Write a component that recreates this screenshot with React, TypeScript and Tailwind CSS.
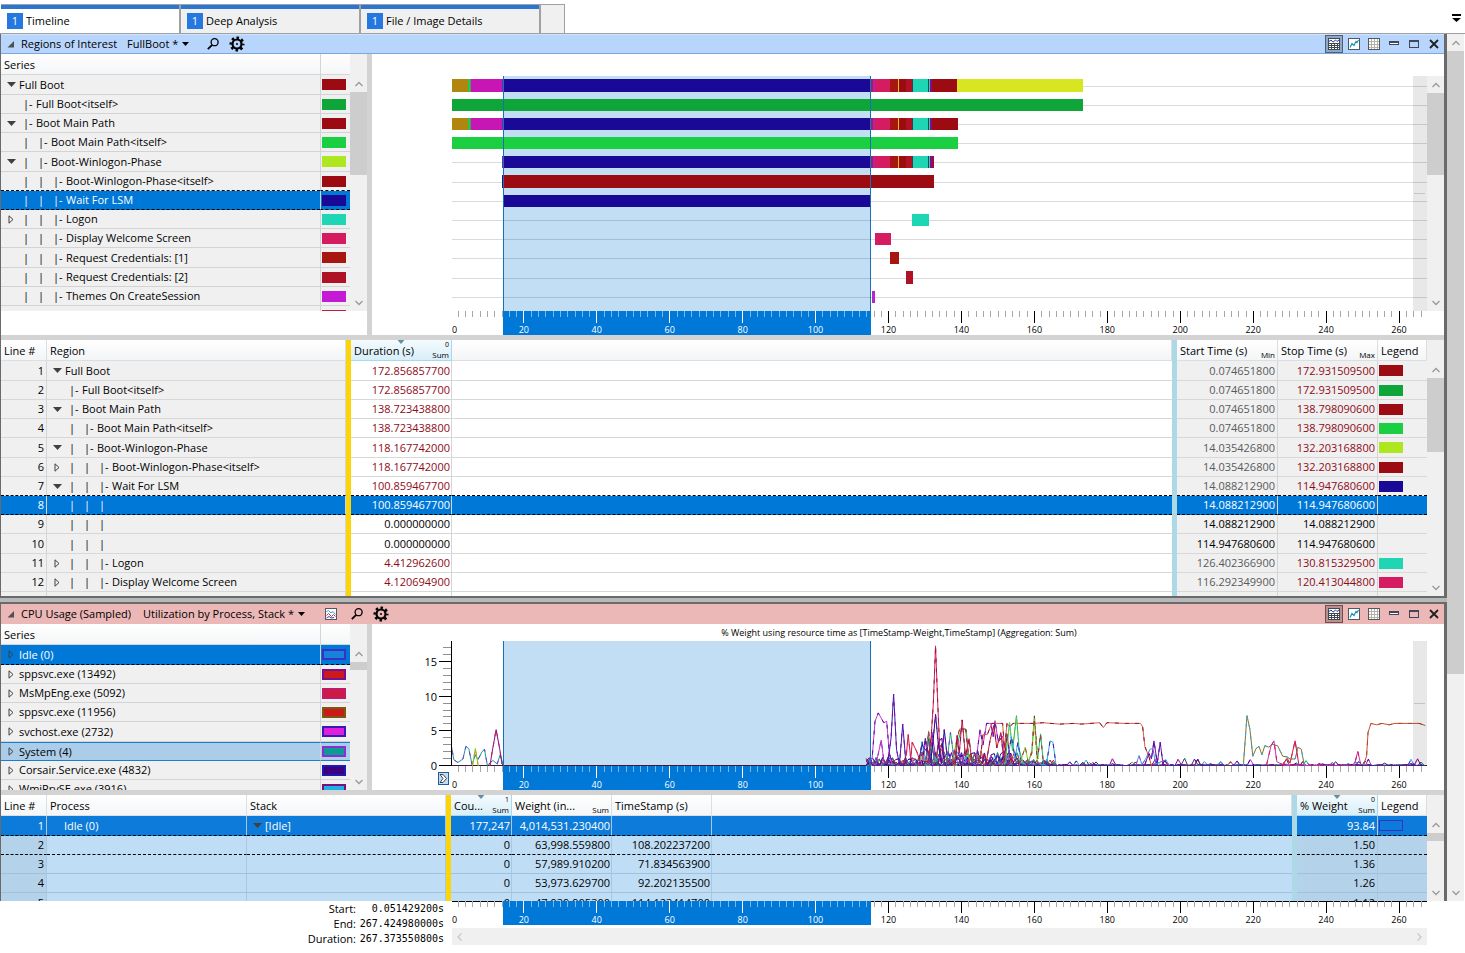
import { ReactNode } from "react";
import clsx from "clsx";

const DURATION = 267.37;
const SELECTION = { start: 14.088, end: 114.948 };
const MAX_WEIGHT = 17.9;

type Segment = [start: number, end: number, color: string];
type Toggle = "open" | "closed";
type SeriesRow = {
  label: string;
  depth?: number;
  toggle?: Toggle;
  fill: string;
  edge?: string;
  state?: "selected" | "related";
  dashed?: boolean;
};
type RegionRow = {
  line?: number;
  label?: string;
  depth?: number;
  toggle?: Toggle;
  duration?: string;
  start?: string;
  stop?: string;
  color?: string;
  plain?: boolean;
  selected?: boolean;
  dashed?: boolean;
};

const bootSeries: SeriesRow[] = [
  { label: "Full Boot", toggle: "open", fill: "#9c0b12" },
  { label: "Full Boot<itself>", depth: 1, fill: "#0ea638" },
  { label: "Boot Main Path", depth: 1, toggle: "open", fill: "#9c0b12" },
  { label: "Boot Main Path<itself>", depth: 2, fill: "#1bcf43" },
  { label: "Boot-Winlogon-Phase", depth: 2, toggle: "open", fill: "#aee620" },
  { label: "Boot-Winlogon-Phase<itself>", depth: 3, fill: "#9c0b12", dashed: true },
  { label: "Wait For LSM", depth: 3, fill: "#1a0896", state: "selected", dashed: true },
  { label: "Logon", depth: 3, toggle: "closed", fill: "#1ed6b4" },
  { label: "Display Welcome Screen", depth: 3, fill: "#d61c60" },
  { label: "Request Credentials: [1]", depth: 3, fill: "#a8170f" },
  { label: "Request Credentials: [2]", depth: 3, fill: "#ae1224" },
  { label: "Themes On CreateSession", depth: 3, fill: "#c41ad6" },
  { label: "Group Session", depth: 3, toggle: "closed", fill: "#c01e3c" },
];

const cpuSeries: SeriesRow[] = [
  { label: "Idle (0)", toggle: "closed", fill: "#1583da", edge: "#3a30c8", state: "selected", dashed: true },
  { label: "sppsvc.exe (13492)", toggle: "closed", fill: "#cc1a1a", edge: "#7a1090" },
  { label: "MsMpEng.exe (5092)", toggle: "closed", fill: "#cc1a44", edge: "#c01a6a" },
  { label: "sppsvc.exe (11956)", toggle: "closed", fill: "#cc1a1a", edge: "#7a5a10" },
  { label: "svchost.exe (2732)", toggle: "closed", fill: "#e020d8", edge: "#3a18b8" },
  { label: "System (4)", toggle: "closed", fill: "#0c9a94", edge: "#8a30d0", state: "related" },
  { label: "Corsair.Service.exe (4832)", toggle: "closed", fill: "#3c0080", edge: "#1c18b0" },
  { label: "WmiPrvSE.exe (3916)", toggle: "closed", fill: "#20b0e8", edge: "#7a1080" },
];

const regionRows: RegionRow[] = [
  { line: 1, label: "Full Boot", toggle: "open", duration: "172.856857700", start: "0.074651800", stop: "172.931509500", color: "#9c0b12" },
  { line: 2, label: "Full Boot<itself>", depth: 1, duration: "172.856857700", start: "0.074651800", stop: "172.931509500", color: "#0ea638" },
  { line: 3, label: "Boot Main Path", depth: 1, toggle: "open", duration: "138.723438800", start: "0.074651800", stop: "138.798090600", color: "#9c0b12" },
  { line: 4, label: "Boot Main Path<itself>", depth: 2, duration: "138.723438800", start: "0.074651800", stop: "138.798090600", color: "#1bcf43" },
  { line: 5, label: "Boot-Winlogon-Phase", depth: 2, toggle: "open", duration: "118.167742000", start: "14.035426800", stop: "132.203168800", color: "#aee620" },
  { line: 6, label: "Boot-Winlogon-Phase<itself>", depth: 3, toggle: "closed", duration: "118.167742000", start: "14.035426800", stop: "132.203168800", color: "#9c0b12" },
  { line: 7, label: "Wait For LSM", depth: 3, toggle: "open", duration: "100.859467700", start: "14.088212900", stop: "114.947680600", color: "#1a0896", dashed: true },
  { line: 8, depth: 3, duration: "100.859467700", start: "14.088212900", stop: "114.947680600", selected: true, dashed: true },
  { line: 9, depth: 3, duration: "0.000000000", start: "14.088212900", stop: "14.088212900", plain: true },
  { line: 10, depth: 3, duration: "0.000000000", start: "114.947680600", stop: "114.947680600", plain: true },
  { line: 11, label: "Logon", depth: 3, toggle: "closed", duration: "4.412962600", start: "126.402366900", stop: "130.815329500", color: "#1ed6b4" },
  { line: 12, label: "Display Welcome Screen", depth: 3, toggle: "closed", duration: "4.120694900", start: "116.292349900", stop: "120.413044800", color: "#d61c60" },
  {},
];

const cpuRows = [
  { line: 1, process: "Idle (0)", stack: "[Idle]", count: "177,247", weight: "4,014,531.230400", time: "", percent: "93.84" },
  { line: 2, count: "0", weight: "63,998.559800", time: "108.202237200", percent: "1.50" },
  { line: 3, count: "0", weight: "57,989.910200", time: "71.834563900", percent: "1.36" },
  { line: 4, count: "0", weight: "53,973.629700", time: "92.202135500", percent: "1.26" },
  { line: 5, count: "0", weight: "47,939.905300", time: "114.123414700", percent: "1.12" },
];

const earlyBoot: Segment[] = [
  [0, 4.4, "#b0860f"],
  [4.4, 4.9, "#1bcf43"],
  [4.9, 5.2, "#6a8a78"],
  [5.2, 13.9, "#c816b4"],
];
const winlogon: Segment[] = [
  [13.8, 14.1, "#6a2cb0"],
  [14.1, 114.9, "#1a0896"],
  [114.9, 115.5, "#8a2a60"],
  [115.5, 116.1, "#c816b4"],
  [116.1, 120.2, "#d61c60"],
  [120.2, 122.3, "#a8170f"],
  [122.3, 122.6, "#e0c820"],
  [122.6, 124.5, "#9c0b12"],
  [124.5, 126.1, "#ae1224"],
  [126.1, 126.5, "#403c50"],
  [126.5, 130.6, "#1ed6b4"],
  [130.6, 130.9, "#204050"],
  [130.9, 131.2, "#1ed6b4"],
  [131.2, 131.6, "#7a1090"],
];

const bars: { y: number; height: number; segments: Segment[] }[] = [
  { y: 3, height: 13, segments: [...earlyBoot, ...winlogon, [131.6, 138.6, "#9c0b12"], [138.6, 173, "#d8e622"]] },
  { y: 23, height: 12, segments: [[0, 173, "#0ea638"]] },
  { y: 42, height: 12, segments: [...earlyBoot, ...winlogon, [131.6, 138.8, "#9c0b12"]] },
  { y: 61, height: 12, segments: [[0, 138.8, "#1bcf43"]] },
  { y: 80, height: 12, segments: [...winlogon, [131.6, 132.2, "#a00848"]] },
  { y: 99, height: 13, segments: [[13.8, 14.2, "#3a1060"], [14.2, 132.2, "#9c0b12"]] },
  { y: 119, height: 12, segments: [[14.2, 114.9, "#1a0896"]] },
  { y: 138, height: 12, segments: [[126.2, 130.9, "#1ed6b4"]] },
  { y: 157, height: 12, segments: [[116.1, 120.4, "#d61c60"]] },
  { y: 176, height: 12, segments: [[120.2, 122.6, "#a8170f"]] },
  { y: 195, height: 13, segments: [[124.6, 126.5, "#ae1224"]] },
  { y: 215, height: 12, segments: [[115.2, 116.1, "#b428c8"]] },
];
const gridLines = [10, 29, 48, 67, 86, 106, 125, 144, 163, 182, 202, 221];

type Trace = { color: string; dash: string; points: [number, number][] };

const traces: Trace[] = [
  { color: "#16a08c", dash: "#8a30d0", points: [[0, 3.6], [0.9, 0.9], [2, 0.5], [3.4, 1], [4.2, 2.8], [5, 2.5], [5.9, 0.2], [6.8, 1.6], [7.5, 0.9], [8.6, 2], [9.3, 2.4], [10.1, 0.1], [11.6, 0.8], [12.8, 0.3], [13.6, 1.6], [14.6, 0]] },
  { color: "#7ad020", dash: "#c0a010", points: [[6, 0], [6.8, 2.5], [7.6, 0]] },
  { color: "#7a1090", dash: "#cc1a44", points: [[10.8, 0], [11.4, 2], [12.5, 5.2], [13.5, 2.4], [14.1, 0.3], [15, 0]] },
  { color: "#d030c8", dash: "#3a18b8", points: [[115, 0.3], [115.6, 1], [116.4, 6.4], [117.3, 7.6], [118.8, 6.2], [119.6, 6.4], [120.3, 2], [121, 0.3]] },
  { color: "#d030c8", dash: "#8a30d0", points: [[116.6, 0.1], [117.4, 2], [118.1, 3.7], [118.9, 0.4]] },
  { color: "#3a18b8", dash: "#7a1090", points: [[119.8, 0], [120.8, 4], [121.5, 10.3], [122.3, 2.4], [123.1, 0.2], [124, 6], [124.9, 0.3]] },
  { color: "#cc1a44", dash: "#d61c60", points: [[124, 0.3], [125, 1.6], [125.5, 4.5], [126.2, 1], [126.6, 3.4], [127.9, 2], [128.8, 0.6]] },
  { color: "#d61c60", dash: "#a01830", points: [[130.8, 0.4], [131.8, 4.2], [132.4, 9], [133, 17.2], [133.6, 9], [134.1, 3], [134.6, 0.2]] },
  { color: "#1a0896", dash: "#7a1090", points: [[131.6, 0.4], [132.4, 4], [133, 7.4], [133.7, 3.4], [134.6, 0.4], [135.4, 5.2], [136.3, 0.8]] },
  { color: "#18b070", dash: "#8a30d0", points: [[136, 0.2], [137.1, 4.8], [138.2, 0.6], [139.2, 3.6], [140.2, 5.4], [141.4, 5.2], [142, 1.8], [143.2, 0.4]] },
  { color: "#8ab020", dash: "#cc1a44", points: [[137.6, 0.4], [138.6, 3.2], [139.6, 5.3], [141.2, 5.3], [142.2, 0.6], [144.2, 1.8], [145.6, 0.2]] },
  { color: "#cc1a44", dash: "#8a1050", points: [[138.4, 0.2], [138.9, 4.4], [139.5, 1.8], [140.3, 6.6], [141.2, 1.4], [142.2, 3.9], [143, 0.5]] },
  { color: "#d030c8", dash: "#3a18b8", points: [[144, 0.3], [145.2, 5.2], [146, 3], [147, 6.1], [148.2, 6.1], [148.8, 4.2], [149.3, 6.5], [150.2, 3.4], [151.4, 4.3], [152, 0.6]] },
  { color: "#d86038", dash: "#8a1050", points: [[145.3, 1], [146, 4.5], [147.2, 4.5], [148.4, 6.1], [151.4, 6.1], [151.9, 2.4], [152.6, 6.1], [153.4, 5.6], [154.2, 6.1], [160, 6.1], [162.4, 6.2], [167, 6], [171, 6.1], [173, 6], [178, 6.2], [179, 5.5], [180, 6.2], [185, 6.1], [189.2, 6.1], [189.8, 5.6], [190.4, 2.8], [191.6, 1.2], [192.2, 0]] },
  { color: "#cc1a1a", dash: "#7a1090", points: [[146.8, 0.2], [148, 3.8], [149, 5.8], [149.8, 2.6], [150.9, 4.8], [151.8, 0.4], [152.6, 4.6], [153.4, 1.2], [154.2, 0.2]] },
  { color: "#18b070", dash: "#7ad020", points: [[152, 0.2], [153.3, 6.2], [154.1, 2.2], [155.2, 7.2], [155.9, 2.4], [157, 0.4]] },
  { color: "#30a8e0", dash: "#3a18b8", points: [[152.6, 0.3], [153.8, 4.2], [154.8, 1.2], [155.6, 3.4], [156.5, 0.4], [163.4, 0.2], [164.4, 3.6], [165.2, 3.4], [166, 0.3]] },
  { color: "#18c060", dash: "#a01830", points: [[158.2, 0.2], [159.4, 2.1], [160.1, 7.2], [161, 1], [161.8, 4.6], [162.6, 0.3]] },
  { color: "#7ad020", dash: "#cc1a44", points: [[156, 0.2], [157.6, 2.7], [158.4, 0.6], [159.4, 1.8], [160.1, 6.8], [160.9, 0.4]] },
  { color: "#7a1090", dash: "#3a18b8", points: [[190.4, 0.2], [191.5, 1.8], [192.2, 1], [192.9, 3.6], [193.8, 0.4], [194.6, 3.4], [195.4, 0.2], [196.2, 0.1]] },
  { color: "#30a8e0", dash: "#d030c8", points: [[188, 0.2], [188.8, 1.5], [189.6, 0.2], [190.6, 1], [191.8, 2.4], [192.6, 2.5], [193.4, 0.3], [196.2, 0.9], [197, 0.1]] },
  { color: "#8a7020", dash: "#30a8e0", points: [[217.4, 0], [218.4, 7.2], [219.2, 5.3], [220, 1.4], [220.9, 2.5], [221.7, 2.8], [222.5, 1.6], [223.3, 2.9], [224.4, 2.7], [225.4, 3.1], [226.8, 2.9], [228.2, 1.4], [229.4, 1.3], [230.2, 1], [231.6, 1], [232.4, 2.7], [233.3, 2.4], [234.1, 0.2]] },
  { color: "#d030c8", dash: "#cc1a44", points: [[223.8, 0.2], [225, 2.9], [225.8, 3.6], [226.6, 0.6], [228.6, 0.1], [247.8, 0], [248.8, 2.1], [249.6, 0.2]] },
  { color: "#cc1a44", dash: "#d61c60", points: [[228, 0.1], [229.4, 1.1], [230.2, 0.4], [231.6, 3.6], [232.6, 0.3]] },
  { color: "#d84838", dash: "#8a5a20", points: [[250.4, 0.2], [251.2, 1.4], [251.6, 4.8], [252.4, 6.1], [254, 5.9], [255.4, 6.1], [257.4, 5.9], [259, 6.1], [265.6, 6.1], [267.3, 5.8]] },
];

// Small processes that only show up as a band of low activity
function backgroundTrace(seed: number, color: string, dash: string): Trace {
  let state = seed;
  const next = () => {
    state = (state * 16807) % 2147483647;
    return state / 2147483647;
  };
  const points: [number, number][] = [];
  for (let t = 114; t < DURATION; t += 0.9) {
    const busy = t > 166 ? 0.22 : t > 156 ? 1 : t > 135 ? 2.2 : t > 129 ? 4 : 1.3;
    const spike = next() > 0.95 ? next() : 0;
    const value = Math.pow(next(), 3) * busy + (t > 166 ? spike : spike * busy * 0.8);
    points.push([t, value]);
  }
  return { color, dash, points };
}

const background: Trace[] = [
  backgroundTrace(11, "#3a18b8", "#7a1090"),
  backgroundTrace(2097, "#1a0896", "#30a8e0"),
  backgroundTrace(35533, "#7a1090", "#d030c8"),
  backgroundTrace(47111, "#18b070", "#8a30d0"),
  backgroundTrace(59753, "#cc1a44", "#7a5a10"),
  backgroundTrace(61999, "#30a8e0", "#3a18b8"),
  backgroundTrace(77773, "#8ab020", "#7a1090"),
  backgroundTrace(88411, "#d030c8", "#1a0896"),
  backgroundTrace(95213, "#4a3070", "#16a08c"),
  backgroundTrace(104729, "#a01830", "#3a18b8"),
  backgroundTrace(130003, "#2030a0", "#7a1090"),
];

const pct = (t: number) => `${(t / DURATION) * 100}%`;

const rowHeight = "h-[19px] first:h-5 nth-[5n]:h-5";

function Chevron({ d, faint }: { d: string; faint?: boolean }) {
  return (
    <svg viewBox="0 0 8 8" className="size-2" fill="none" stroke={faint ? "#c8c8c8" : "#9a9a9a"} strokeWidth="1.3">
      <path d={d} />
    </svg>
  );
}

function VScroll({ thumb, className }: { thumb: string; className?: string }) {
  return (
    <div className={clsx("flex w-[17px] shrink-0 flex-col bg-[#f0f0f0]", className)}>
      <button type="button" aria-label="Scroll up" className="flex h-[17px] items-center justify-center">
        <Chevron d="M.5 6 4 2.5 7.5 6" />
      </button>
      <div className={clsx("bg-[#cdcdcd]", thumb)} />
      <button type="button" aria-label="Scroll down" className="mt-auto flex h-[17px] items-center justify-center">
        <Chevron d="M.5 2 4 5.5 7.5 2" />
      </button>
    </div>
  );
}

function ToggleIcon({ open, name }: { open: boolean; name: string }) {
  return (
    <button type="button" aria-label={`Toggle ${name}`} className="flex w-3 items-center justify-center">
      {open ? (
        <svg viewBox="0 0 9 5" className="h-[5px] w-[9px]">
          <path d="M0 0h9L4.5 5z" fill="#404040" />
        </svg>
      ) : (
        <svg viewBox="0 0 6 9" className="h-[9px] w-[6px]">
          <path d="M1 .8 5 4.5 1 8.200z" fill="none" stroke="#404040" />
        </svg>
      )}
    </button>
  );
}

function TreeLabel({ label, depth = 0, toggle }: { label?: string; depth?: number; toggle?: Toggle }) {
  return (
    <div className="flex pl-1 whitespace-pre">
      {toggle ? <ToggleIcon open={toggle === "open"} name={label ?? ""} /> : <span className="w-3" />}
      <span className={depth ? "w-[6px]" : "w-[2px]"} />
      {Array.from({ length: depth }, (_, i) =>
        i === depth - 1 && label ? (
          <span key={i} className="w-[13px]">|-</span>
        ) : (
          <span key={i} className="w-[15px]">|</span>
        )
      )}
      <span>{label}</span>
    </div>
  );
}

function SeriesList({ rows, thumb, height }: { rows: SeriesRow[]; thumb: string; height: string }) {
  return (
    <div className={clsx("flex w-[366px] shrink-0 overflow-hidden", height)}>
      <div className="flex-1 overflow-hidden">
        <table className="w-full table-fixed border-separate border-spacing-0">
          <colgroup>
            <col />
            <col className="w-[30px]" />
          </colgroup>
          <thead>
            <tr className="h-[21px] bg-linear-to-b from-white to-[#f3f5f7]">
              <th className="border-b border-[#d5d5d5] pt-[2px] pl-[3px] text-left font-normal">Series</th>
              <th aria-label="Color" className="border-b border-l border-[#d5d5d5]" />
            </tr>
          </thead>
          <tbody>
            {rows.map((row) => {
              const line = clsx(
                "border-b",
                row.dashed
                  ? "border-b-black [border-bottom-style:dashed]"
                  : row.state === "related"
                    ? "border-b-[#1a7fc8]"
                    : "border-b-[#d3d3d3]"
              );
              return (
                <tr
                  key={row.label}
                  className={clsx(
                    rowHeight,
                    row.state === "selected" && "bg-[#0078d7] text-white",
                    row.state === "related" && "bg-[#abcde9]",
                    !row.state && "bg-[#f0f0f0]"
                  )}
                >
                  <td className={clsx(line, row.state === "related" && "border-t border-t-[#1a7fc8]")}>
                    <TreeLabel label={row.label} depth={row.depth} toggle={row.toggle} />
                  </td>
                  <td className={clsx(line, "border-l border-l-[#d0d4d8]", row.state === "related" && "border-t border-t-[#1a7fc8]")}>
                    <div
                      className="ml-px h-[11px] w-6 border-2"
                      style={{ backgroundColor: row.fill, borderColor: row.edge ?? row.fill }}
                    />
                  </td>
                </tr>
              );
            })}
          </tbody>
        </table>
      </div>
      <div className="flex flex-col bg-[#f0f0f0] pt-[21px]">
        <VScroll thumb={thumb} className="flex-1" />
      </div>
    </div>
  );
}

function TimeAxis({ line }: { line?: boolean }) {
  const ticks = Array.from({ length: 133 }, (_, i) => (i + 1) * 2);
  return (
    <svg className="block h-6 w-full overflow-visible" shapeRendering="crispEdges" fontSize="9">
      {line && <rect width="100%" height="1" fill="#000" />}
      <rect x={pct(SELECTION.start)} width={pct(SELECTION.end - SELECTION.start)} height="24" fill="#0078d7" />
      <text x="0" y="22" fill="#000">0</text>
      {ticks.map((t) => {
        const major = t % 20 === 0;
        const inside = t > SELECTION.start && t < SELECTION.end;
        return (
          <g key={t}>
            <rect
              x={pct(t - 0.4)}
              width="1"
              height={major ? 12 : 6}
              fill={major ? (inside ? "#fff" : "#000") : inside ? "#7ab8ea" : "#a8a8a8"}
            />
            {major && (
              <text x={pct(t - 0.3)} y="22" textAnchor="middle" fill={inside ? "#fff" : "#000"}>
                {t}
              </text>
            )}
          </g>
        );
      })}
    </svg>
  );
}

function SelectionEdges() {
  return (
    <>
      <rect x={pct(SELECTION.start)} width="1" height="100%" fill="#1a6fb8" />
      <rect x={pct(SELECTION.end - 0.2)} width="1" height="100%" fill="#1a6fb8" />
    </>
  );
}

function OverscanStrip({ mark }: { mark: number }) {
  return (
    <svg x="100%" overflow="visible">
      <rect x="-14" width="14" height="100%" fill="#000" fillOpacity="0.09" />
      <rect x="-13" y={mark} width="11" height="1" fill="#c4c4c4" />
    </svg>
  );
}

function RegionChart() {
  return (
    <div className="min-w-0 flex-1 bg-white pt-[22px]">
      <div className="flex pl-20">
        <svg className="block h-[235px] min-w-0 flex-1" shapeRendering="crispEdges" role="img" aria-label="Regions over time">
          <rect x={pct(SELECTION.start)} width={pct(SELECTION.end - SELECTION.start)} height="100%" fill="#c2def5" />
          {gridLines.map((y) => (
            <rect key={y} y={y} width="100%" height="1" fill="#000" fillOpacity="0.14" />
          ))}
          {bars.map((bar) =>
            bar.segments.map(([start, end, color]) => (
              <rect key={`${bar.y}-${start}`} x={pct(start)} y={bar.y} width={pct(end - start)} height={bar.height} fill={color} />
            ))
          )}
          <SelectionEdges />
          <OverscanStrip mark={117} />
        </svg>
        <VScroll thumb="h-[82px]" />
      </div>
      <div className="pr-[17px] pl-20">
        <TimeAxis />
      </div>
    </div>
  );
}

function toPoints(points: [number, number][]) {
  return points.map(([t, value]) => `${t},${MAX_WEIGHT - value}`).join(" ");
}

function WeightScale() {
  const values = Array.from({ length: 18 }, (_, i) => i);
  return (
    <svg className="h-[125px] w-20 shrink-0 overflow-visible" shapeRendering="crispEdges" fontSize="11">
      <rect x="79" width="1" height="125" fill="#000" />
      {values.map((v) => {
        const y = Math.round(124 - v * 6.93);
        const major = v % 5 === 0;
        return (
          <g key={v}>
            <rect x={major ? 67 : 71} y={y} width={major ? 12 : 8} height="1" fill={major ? "#000" : "#909090"} />
            {major && (
              <text x="65" y={y + 5} textAnchor="end" fill="#000">
                {v}
              </text>
            )}
          </g>
        );
      })}
    </svg>
  );
}

function WeightChart() {
  return (
    <div className="min-w-0 flex-1 bg-white">
      <p className="h-[17px] pr-[18px] text-center text-[9px] leading-[17px]">
        % Weight using resource time as [TimeStamp-Weight,TimeStamp] (Aggregation: Sum)
      </p>
      <div className="flex pr-[17px]">
        <WeightScale />
        <svg className="block h-[125px] min-w-0 flex-1" role="img" aria-label="CPU weight over time">
          <rect x={pct(SELECTION.start)} width={pct(SELECTION.end - SELECTION.start)} height="100%" fill="#c2def5" shapeRendering="crispEdges" />
          <rect y="124" width="100%" height="1" fill="#401838" />
          <svg width="100%" height="100%" viewBox={`0.4 0 ${DURATION} ${MAX_WEIGHT}`} preserveAspectRatio="none">
            {[...background, ...traces].map((trace, i) => (
              <g key={i} fill="none" strokeWidth="1">
                <polyline points={toPoints(trace.points)} stroke={trace.color} vectorEffect="non-scaling-stroke" />
                <polyline points={toPoints(trace.points)} stroke={trace.dash} strokeDasharray="4 6" vectorEffect="non-scaling-stroke" />
              </g>
            ))}
          </svg>
          <g shapeRendering="crispEdges">
            <SelectionEdges />
            <OverscanStrip mark={62} />
          </g>
        </svg>
      </div>
      <div className="flex pr-[17px]">
        <div className="w-20 shrink-0 pt-[6px] pl-[66px]">
          <button type="button" aria-label="Expand scale" className="flex h-[13px] w-[11px] items-center justify-center border border-[#1a5fa0] bg-[#c2def5]">
            <svg viewBox="0 0 9 11" className="h-[11px] w-[9px]" fill="#fff" stroke="#303030" strokeWidth="0.9">
              <path d="M1 1.5h3L7.5 5.5 4 9.5H1l3-4z" />
            </svg>
          </button>
        </div>
        <div className="min-w-0 flex-1">
          <TimeAxis />
        </div>
      </div>
    </div>
  );
}

function GraphTableIcon() {
  return (
    <svg viewBox="0 0 12 12" className="size-3" shapeRendering="crispEdges">
      <rect width="12" height="12" fill="#404850" />
      <rect x="1" y="1" width="10" height="4" fill="#fff" />
      <path d="M1 3.5 3 2l2 2.200L7.500 2l1.500 1.500L11 2" fill="none" stroke="#2838a0" shapeRendering="auto" />
      <path d="M1 6h2v1H1zM4 6h2v1H4zM7 6h2v1H7zM10 6h1v1h-1zM1 8h2v1H1zM4 8h2v1H4zM7 8h2v1H7zM10 8h1v1h-1zM1 10h2v1H1zM4 10h2v1H4zM7 10h2v1H7zM10 10h1v1h-1z" fill="#fff" />
    </svg>
  );
}

function GraphIcon({ double }: { double?: boolean }) {
  return (
    <svg viewBox="0 0 12 12" className="size-3">
      <rect x=".5" y=".5" width="11" height="11" fill="#fff" stroke="#505860" />
      {double ? (
        <g fill="none">
          <path d="M1.5 3.5 3.5 2.5 6 5 8 3.5l2.500 3" stroke="#30a0c8" />
          <path d="M1.5 7.5 3.5 5.5l3 3L8.5 6.5l2 2" stroke="#c03058" />
          <path d="M1.5 10 4 8.5l2 1.500 3-.5" stroke="#4040a0" />
        </g>
      ) : (
        <path d="M2 9.5 4 5.5l2 2 2-4 1 1 1.500-2.500" fill="none" stroke="#1890b8" strokeWidth="1.200" />
      )}
    </svg>
  );
}

function TableIcon() {
  return (
    <svg viewBox="0 0 12 12" className="size-3" shapeRendering="crispEdges">
      <rect x=".5" y=".5" width="11" height="11" fill="#fff" stroke="#505860" />
      <path d="M3.5 1v10M6.5 1v10M9.5 1v10M1 3.5h10M1 6.5h10M1 9.5h10" stroke="#b8b0a8" />
    </svg>
  );
}

function SearchIcon() {
  return (
    <svg viewBox="0 0 12 12" className="size-3" fill="none" stroke="#000">
      <circle cx="7.6" cy="4.2" r="3.5" strokeWidth="1.3" />
      <path d="M5.2 6.8.8 11.2" strokeWidth="1.800" />
    </svg>
  );
}

function GearIcon() {
  return (
    <svg viewBox="0 0 16 16" className="size-4" fill="none" stroke="#000">
      <circle cx="8" cy="8" r="4.5" strokeWidth="2.200" />
      <circle cx="8" cy="8" r="6.3" strokeWidth="2.400" strokeDasharray="2.500 2.448" strokeDashoffset="1.250" />
      <circle cx="8" cy="8" r="1" fill="#000" stroke="none" />
    </svg>
  );
}

type PanelHeaderProps = { title: string; preset: string; tone: "blue" | "red" };

function PanelHeader({ title, preset, tone }: PanelHeaderProps) {
  const red = tone === "red";
  return (
    <header
      className={clsx(
        "flex h-5 items-center border-y",
        red ? "border-[#ecb7b7] bg-[#ecb7b7]" : "border-t-[#cfe3ff] border-b-[#7fa6d8] bg-[#b8d6fd]"
      )}
    >
      <button type="button" aria-label={`Collapse ${title}`} className="flex w-5 justify-center pr-px">
        <svg viewBox="0 0 7 7" className="size-[7px]">
          <path d="M7 0v6.500H.5z" fill="#505050" />
        </svg>
      </button>
      <h2>{title}</h2>
      <button type="button" className={clsx("flex items-center gap-1", red ? "ml-3" : "ml-[10px]")}>
        {preset}
        <svg viewBox="0 0 7 4" className="h-1 w-[7px]">
          <path d="M0 0h7L3.5 4z" />
        </svg>
      </button>
      {red && (
        <button type="button" aria-label="Graph type" className="ml-5">
          <GraphIcon double />
        </button>
      )}
      <button type="button" aria-label="Search" className={red ? "ml-[14px]" : "ml-[18px]"}>
        <SearchIcon />
      </button>
      <button type="button" aria-label="Settings" className="ml-[10px]">
        <GearIcon />
      </button>
      <div className="ml-auto flex items-center *:flex *:w-5 *:justify-center">
        <button type="button" aria-label="Graph and table" aria-pressed="true">
          <span
            className={clsx(
              "flex size-[18px] items-center justify-center border",
              red ? "border-[#705050] bg-[#b89090]" : "border-[#506078] bg-[#90a8c8]"
            )}
          >
            <GraphTableIcon />
          </span>
        </button>
        <button type="button" aria-label="Graph only"><GraphIcon /></button>
        <button type="button" aria-label="Table only"><TableIcon /></button>
        <button type="button" aria-label="Minimize">
          <svg viewBox="0 0 10 10" className="size-[10px]" shapeRendering="crispEdges">
            <path d="M0 2h10v4H0z" fill="#404858" />
            <path d="M1 4h8v1H1z" fill="#fff" />
          </svg>
        </button>
        <button type="button" aria-label="Maximize">
          <svg viewBox="0 0 10 10" className="size-[10px]" shapeRendering="crispEdges" fill="none" stroke="#404858">
            <path d="M.5 1.500h9v7h-9zM1 2.500h8" />
          </svg>
        </button>
        <button type="button" aria-label="Close">
          <svg viewBox="0 0 10 10" className="size-[10px]" stroke="#202020" strokeWidth="1.800">
            <path d="m1 1 8 8M9 1 1 9" />
          </svg>
        </button>
      </div>
    </header>
  );
}

type HeadProps = { children?: ReactNode; note?: string; order?: string };

function Head({ children, note, order }: HeadProps) {
  return (
    <th
      className={clsx(
        "relative h-[21px] overflow-hidden border-r border-b pt-[2px] pl-[3px] text-left font-normal whitespace-nowrap",
        order ? "border-[#a8d8f0] bg-linear-to-b from-[#f4fbfe] to-[#d8eef8]" : "border-[#dcdfe2] bg-linear-to-b from-white to-[#f3f5f7]"
      )}
    >
      {children}
      {order && (
        <svg viewBox="0 0 7 4" className="absolute top-0 left-1/2 h-1 w-[7px] -translate-x-1/2">
          <path d="M0 0h7L3.5 4z" fill="#6090a8" />
        </svg>
      )}
      {order && <span className="absolute top-0 right-[2px] text-[7px] leading-[9px]">{order}</span>}
      {note && <span className="absolute right-[2px] bottom-0 text-[8px] leading-[11px]">{note}</span>}
    </th>
  );
}

function Divider({ color, head }: { color: "gold" | "blue"; head?: boolean }) {
  const className = clsx("p-0", color === "gold" ? "bg-[#fbd50a]" : "bg-[#add8e6]");
  return head ? <th aria-hidden="true" className={className} /> : <td className={className} />;
}

function RegionTable() {
  return (
    <div className="flex h-64 overflow-hidden">
      <div className="min-w-0 flex-1">
        <table className="w-full table-fixed border-separate border-spacing-0">
          <colgroup>
            <col className="w-[46px]" />
            <col className="w-[299px]" />
            <col className="w-[5px]" />
            <col className="w-[101px]" />
            <col />
            <col className="w-[5px]" />
            <col className="w-[101px]" />
            <col className="w-[100px]" />
            <col className="w-[49px]" />
          </colgroup>
          <thead>
            <tr>
              <Head>Line #</Head>
              <Head>Region</Head>
              <Divider color="gold" head />
              <Head note="Sum" order="0">Duration (s)</Head>
              <Head />
              <Divider color="blue" head />
              <Head note="Min">Start Time (s)</Head>
              <Head note="Max">Stop Time (s)</Head>
              <Head>Legend</Head>
            </tr>
          </thead>
          <tbody>
            {regionRows.map((row, i) => {
              const cell = clsx("border-r border-b border-r-[#d5d5d5]", row.dashed ? "border-b-black [border-bottom-style:dashed]" : "border-b-[#d8d8d8]");
              const side = row.selected ? "bg-[#0078d7]" : "bg-[#f0f0f0]";
              const middle = row.selected ? "bg-[#0078d7]" : "bg-white";
              const accent = !row.selected && !row.plain && "text-[#8f0a18]";
              return (
                <tr key={i} className={clsx(rowHeight, row.selected && "text-white")}>
                  <td className={clsx(cell, side, "pr-[2px] text-right")}>{row.line}</td>
                  <td className={clsx(cell, side)}>
                    <TreeLabel label={row.label} depth={row.depth} toggle={row.toggle} />
                  </td>
                  <Divider color="gold" />
                  <td className={clsx(cell, middle, accent, "pr-px text-right")}>{row.duration}</td>
                  <td className={clsx(cell, middle, "border-r-0")} />
                  <Divider color="blue" />
                  <td className={clsx(cell, side, "pr-[2px] text-right", accent && "text-[#5a5a5a]")}>{row.start}</td>
                  <td className={clsx(cell, side, accent, "pr-[2px] text-right")}>{row.stop}</td>
                  <td className={clsx(cell, side, "border-r-0")}>
                    {row.color && <div className="ml-px h-[11px] w-6" style={{ backgroundColor: row.color }} />}
                  </td>
                </tr>
              );
            })}
          </tbody>
        </table>
      </div>
      <div className="flex flex-col bg-[#f0f0f0] pt-[21px]">
        <VScroll thumb="h-[74px]" className="flex-1" />
      </div>
    </div>
  );
}

function CpuTable() {
  return (
    <div className="flex h-[106px] overflow-hidden">
      <div className="min-w-0 flex-1">
        <table className="w-full table-fixed border-separate border-spacing-0">
          <colgroup>
            <col className="w-[46px]" />
            <col className="w-[200px]" />
            <col className="w-[199px]" />
            <col className="w-[5px]" />
            <col className="w-[61px]" />
            <col className="w-[100px]" />
            <col className="w-[100px]" />
            <col />
            <col className="w-[5px]" />
            <col className="w-[81px]" />
            <col className="w-[49px]" />
          </colgroup>
          <thead>
            <tr>
              <Head>Line #</Head>
              <Head>Process</Head>
              <Head>Stack</Head>
              <Divider color="gold" head />
              <Head note="Sum" order="1">Cou...</Head>
              <Head note="Sum">Weight (in...</Head>
              <Head>TimeStamp (s)</Head>
              <Head />
              <Divider color="blue" head />
              <Head note="Sum" order="0">% Weight</Head>
              <Head>Legend</Head>
            </tr>
          </thead>
          <tbody>
            {cpuRows.map((row) => {
              const first = row.line === 1;
              const cell = clsx(
                "border-r border-b border-r-[#a8c8e0]",
                row.line < 3 ? "border-b-black [border-bottom-style:dashed]" : "border-b-[#a4c0d8]",
                first ? "bg-[#0c7bd9]" : "bg-[#bfddf5]"
              );
              const side = first ? "" : "bg-[#b4d2ea]!";
              return (
                <tr key={row.line} className={clsx(rowHeight, first && "text-white")}>
                  <td className={clsx(cell, side, "pr-[2px] text-right")}>{row.line}</td>
                  <td className={clsx(cell, "pl-[17px]")}>{row.process}</td>
                  <td className={cell}>
                    {row.stack && <TreeLabel label={row.stack} toggle="open" />}
                  </td>
                  <Divider color="gold" />
                  <td className={clsx(cell, "pr-px text-right")}>{row.count}</td>
                  <td className={clsx(cell, "pr-px text-right")}>{row.weight}</td>
                  <td className={clsx(cell, "pr-px text-right")}>{row.time}</td>
                  <td className={clsx(cell, "border-r-0")} />
                  <Divider color="blue" />
                  <td className={clsx(cell, side, "pr-[2px] text-right")}>{row.percent}</td>
                  <td className={clsx(cell, side, "border-r-0")}>
                    {first && <div className="ml-px h-[11px] w-6 border border-[#3a30c8]" />}
                  </td>
                </tr>
              );
            })}
          </tbody>
        </table>
      </div>
      <div className="flex flex-col bg-[#f0f0f0] pt-[21px]">
        <VScroll thumb="h-2" className="flex-1" />
      </div>
    </div>
  );
}

function TabBar() {
  return (
    <div className="flex items-end border-b border-[#a0a0a0] pt-1">
      {["Timeline", "Deep Analysis", "File / Image Details"].map((name, i) => (
        <button
          key={name}
          type="button"
          className={clsx(
            "flex h-[29px] w-[180px] flex-col border-t border-r-2 border-[#a0a0a0] text-left first:ml-px",
            i > 0 && "bg-[#f0f0f0]"
          )}
        >
          <span className="h-1 w-full bg-[#2a76d2]" />
          <span className="flex flex-1 items-center gap-[3px] pl-[6px]">
            <span className="flex size-4 items-center justify-center bg-[#2478e0] text-white">1</span>
            {name}
          </span>
        </button>
      ))}
      <button type="button" aria-label="New tab" className="h-[29px] w-6 border-t border-r border-[#a0a0a0] bg-[#f0f0f0]" />
      <button type="button" aria-label="Tab list" className="mr-1 mb-[11px] ml-auto">
        <svg viewBox="0 0 9 8" className="h-2 w-[9px]">
          <path d="M0 0h9v2H0zM0 4h9L4.5 8z" />
        </svg>
      </button>
    </div>
  );
}

const range = [
  ["Start:", "0.051429200s"],
  ["End:", "267.424980000s"],
  ["Duration:", "267.373550800s"],
];

export default function App() {
  return (
    <div className="min-w-[1100px] bg-white pb-2 font-['Open_Sans','Noto_Sans',sans-serif] text-[11px] leading-4 text-black">
      <TabBar />
      <div className="flex">
        <main className="min-w-0 flex-1 bg-[#b8b8b8]">
          <section className="border-r-3 border-b-2 border-l border-[#6a6a6a] bg-white">
            <PanelHeader title="Regions of Interest" preset="FullBoot *" tone="blue" />
            <div className="flex">
              <SeriesList rows={bootSeries} thumb="h-[83px]" height="h-[257px]" />
              <div className="w-[5px] shrink-0 bg-[#d3d3d3]" />
              <RegionChart />
            </div>
            <div className="h-[5px] bg-[#d3d3d3]" />
            <RegionTable />
          </section>
          <section className="mt-1 border-t-2 border-r-3 border-l border-[#6a6a6a] bg-white">
            <PanelHeader title="CPU Usage (Sampled)" preset="Utilization by Process, Stack *" tone="red" />
            <div className="flex">
              <SeriesList rows={cpuSeries} thumb="h-2" height="h-[166px]" />
              <div className="w-[5px] shrink-0 bg-[#d3d3d3]" />
              <WeightChart />
            </div>
            <div className="h-[5px] bg-[#d3d3d3]" />
            <CpuTable />
          </section>
        </main>
        <VScroll thumb="h-[623px]" className="mr-px" />
      </div>
      <footer className="flex pr-[38px]">
        <dl className="w-[452px] shrink-0 pr-2">
          {range.map(([label, value]) => (
            <div key={label} className="flex h-[15px] items-center justify-end">
              <dt>{label}</dt>
              <dd className="w-[88px] text-right font-['DejaVu_Sans_Mono','Liberation_Mono',monospace] text-[10px]">{value}</dd>
            </div>
          ))}
        </dl>
        <div className="min-w-0 flex-1">
          <TimeAxis line />
          <div className="mt-[3px] flex h-[17px] items-center justify-between bg-[#f0f0f0] px-1">
            <button type="button" aria-label="Scroll left"><Chevron d="M5.5.5 2 4l3.500 3.500" faint /></button>
            <button type="button" aria-label="Scroll right"><Chevron d="M2.5.5 6 4 2.5 7.5" faint /></button>
          </div>
        </div>
      </footer>
    </div>
  );
}
